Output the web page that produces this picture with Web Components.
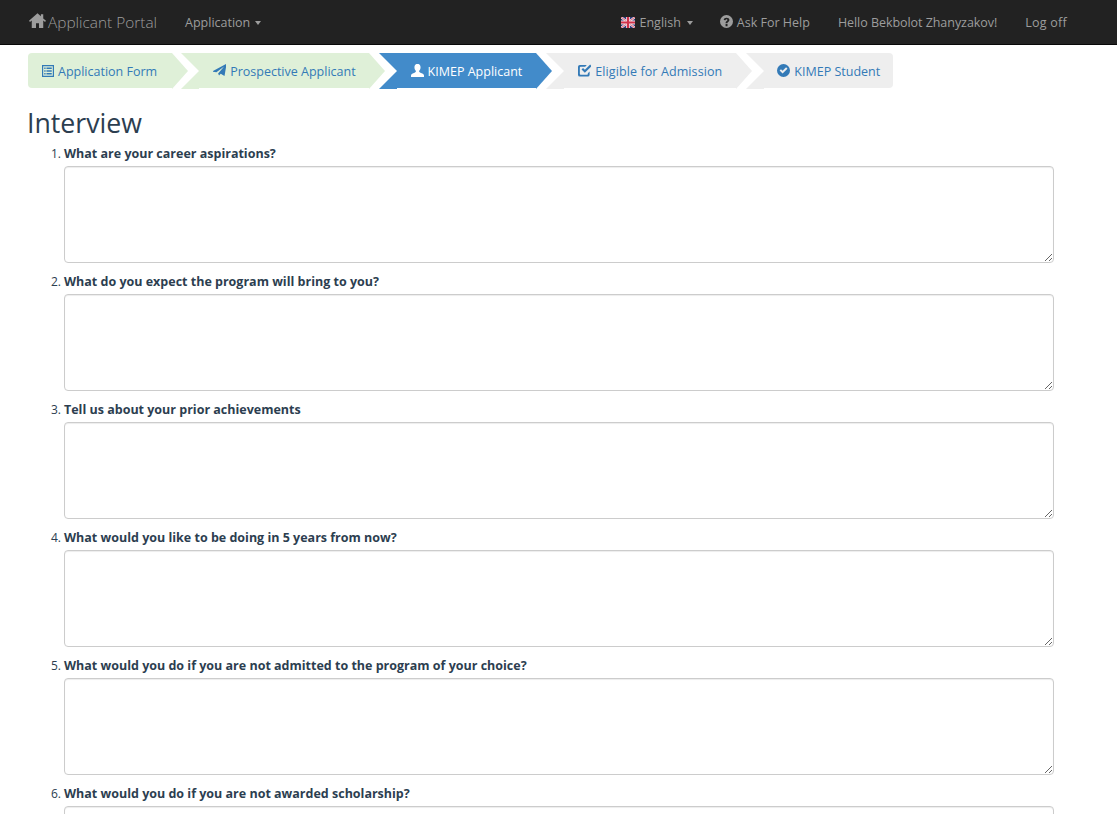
<!DOCTYPE html>
<html lang="en">
<head>
<meta charset="utf-8">
<title>Interview</title>
<style>
    html, body { margin: 0; height: 814px; overflow: hidden; background: #fff; }
    body { font: 12.5px/1.42857 "Open Sans", "Noto Sans", sans-serif; color: #2c3e50; }
</style>
</head>
<body>
<portal-navbar></portal-navbar>
<wizard-steps>
    <wizard-step icon="list" state="done" first style="padding-right:15px">Application Form</wizard-step>
    <wizard-step icon="send" state="done" style="padding-right:13px;margin-left:27px">Prospective Applicant</wizard-step>
    <wizard-step icon="user" state="active">KIMEP Applicant</wizard-step>
    <wizard-step icon="check" state="todo" style="letter-spacing:.1px">Eligible for Admission</wizard-step>
    <wizard-step icon="ok" state="todo" last style="padding-left:13px">KIMEP Student</wizard-step>
</wizard-steps>
<interview-form>
    <interview-question>What are your career aspirations?</interview-question>
    <interview-question>What do you expect the program will bring to you?</interview-question>
    <interview-question>Tell us about your prior achievements</interview-question>
    <interview-question>What would you like to be doing in 5 years from now?</interview-question>
    <interview-question>What would you do if you are not admitted to the program of your choice?</interview-question>
    <interview-question>What would you do if you are not awarded scholarship?</interview-question>
</interview-form>

<script>
const ICONS = {
    home: '<path d="M8 1.200 0 8.300l.9 1L2.600 7.900V15h4V10.600h2.800V15h4V7.900l1.700 1.400.9-1-2.600-2.300V2h-2.200v2.100z"/>',
    list: '<path fill-rule="evenodd" d="M1 1h14v14H1zM2.400 2.400v11.200h11.200V2.400zM3.600 4h1.600v1.600H3.600zm2.600 0h6.200v1.600H6.200zM3.600 7.200h1.600v1.600H3.600zm2.600 0h6.200v1.600H6.200zm-2.600 3.200h1.600V12H3.600zm2.600 0h6.200V12H6.200z"/>',
    send: '<path d="M15.600.8 13.400 14 9.300 11.600l-1.800 1.900-1-2.400L13 3.600 4.700 9.900 0 9.200z"/>',
    user: '<path d="M8 .8c2 0 3.300 1.600 3.300 3.800 0 1.700-.8 3.200-1.600 4 0 .9.4 1.300 1.400 1.700 1.800.7 3.900 1.200 3.900 3v1.700H1v-1.700c0-1.800 2.100-2.300 3.900-3 1-.4 1.400-.8 1.400-1.700-.8-.8-1.600-2.300-1.600-4C4.700 2.400 6 .8 8 .8z"/>',
    check: '<path d="M13.500 9v3.500a2 2 0 0 1-2 2h-8.500a2 2 0 0 1-2-2V4a2 2 0 0 1 2-2h7.500L8.700 3.900H3.800a.8.8 0 0 0-.8.8v7.200c0 .4.4.8.8.8h7a.8.8 0 0 0 .8-.8v-1zM4.800 6.900l1.600-1.600 2 2 5.700-5.700L15.700 3.200 8.400 10.500z"/>',
    ok: '<path fill-rule="evenodd" d="M8 1a7 7 0 1 1 0 14A7 7 0 0 1 8 1zM3.800 8.100 7 11.300l5.300-5.300-1.500-1.500L7 8.300 5.300 6.600z"/>',
    help: '<path fill-rule="evenodd" d="M8 1a7 7 0 1 1 0 14A7 7 0 0 1 8 1zM7 10.700V13h2.100v-2.300zM5 6.300l1.900.3c.1-.7.500-1.100 1.100-1.100.6 0 1 .3 1 .8 0 .4-.3.700-.8 1.100-.9.700-1.200 1.200-1.200 2.500h2c0-.7.200-1 .8-1.400.9-.7 1.300-1.300 1.300-2.300C11.100 4.900 9.800 4 8 4 6.300 4 5.200 4.900 5 6.300z"/>'
};

function icon(name, size, box = '1 1 14 14') {
    return `<svg width="${size}" height="${size}" viewBox="${box}" fill="currentColor" aria-hidden="true">${ICONS[name]}</svg>`;
}

class PortalNavbar extends HTMLElement {
    constructor() {
        super();
        this.attachShadow({ mode: 'open' });
        this.shadowRoot.innerHTML = `
        <style>
            :host { display: flex; align-items: center; height: 43px; padding-top: 1px; background: #222; border-bottom: 1px solid #080808; color: #9d9d9d; }
            a { color: inherit; text-decoration: none; display: flex; align-items: center; white-space: nowrap; }
            .brand { font-size: 15.400px; font-weight: 300; margin-left: 29px; gap: 2px; }
            .brand svg { margin-top: -4px; }
            .app { margin-left: 28px; }
            .right { margin-left: auto; margin-right: 50px; display: flex; align-items: center; }
            .caret { width: 0; height: 0; margin-left: 5px; border-top: 4px solid; border-left: 3.500px solid transparent; border-right: 3.500px solid transparent; }
            .lang { gap: 4px; }
            .lang .caret { margin-left: 2px; }
            .help { margin-left: 27px; gap: 4px; }
            .help svg { margin-top: -3px; }
            .hello { margin-left: 28px; letter-spacing: -.05px; }
            .logoff { margin-left: 28px; letter-spacing: .25px; }
        </style>
        <a class="brand" href="#">${icon('home', 17, '0 0 16 16')}Applicant Portal</a>
        <a class="app" href="#">Application<span class="caret"></span></a>
        <div class="right">
            <a class="lang" href="#">
                <svg width="14" height="11" viewBox="0 0 13 10" preserveAspectRatio="none" aria-hidden="true">
                    <rect width="13" height="10" fill="#2b3a7e"/>
                    <path d="M0 0 13 10M13 0 0 10" stroke="#f3dfe3" stroke-width="2"/>
                    <path d="M0 0 13 10M13 0 0 10" stroke="#d0324b" stroke-width=".7"/>
                    <path d="M6.500 0v10M0 5h13" stroke="#f3dfe3" stroke-width="3.500"/>
                    <path d="M6.500 0v10M0 5h13" stroke="#d0324b" stroke-width="2"/>
                </svg>
                English<span class="caret"></span>
            </a>
            <a class="help" href="#">${icon('help', 13)}Ask For Help</a>
            <a class="hello" href="#">Hello Bekbolot Zhanyzakov!</a>
            <a class="logoff" href="#">Log off</a>
        </div>`;
    }
}
customElements.define('portal-navbar', PortalNavbar);

class WizardSteps extends HTMLElement {
    constructor() {
        super();
        this.attachShadow({ mode: 'open' });
        this.shadowRoot.innerHTML = `
        <style>
            :host { display: flex; margin: 8px 0 0 28px; }
        </style>
        <slot></slot>`;
    }
}
customElements.define('wizard-steps', WizardSteps);

class WizardStep extends HTMLElement {
    constructor() {
        super();
        this.attachShadow({ mode: 'open' });
    }

    connectedCallback() {
        const name = this.getAttribute('icon');
        this.shadowRoot.innerHTML = `
        <style>
            :host { --bg: #eeeeee; --fg: #337ab7; display: flex; align-items: center; gap: 4px; position: relative; box-sizing: border-box; height: 35px; margin-left: 28px; padding: 2px 14px 0; background: var(--bg); color: var(--fg); white-space: nowrap; }
            :host([state="done"]) { --bg: #dff0d8; }
            :host([state="active"]) { --bg: #428bca; --fg: #fff; }
            :host([first]) { margin-left: 0; border-radius: 4px 0 0 4px; }
            :host([first]) svg { width: 12px; height: 12px; }
            :host([last]) { border-radius: 0 4px 4px 0; padding-right: 13px; }
            :host::before, :host::after { content: ""; position: absolute; top: 0; width: 0; height: 0; border-top: 18px solid transparent; border-bottom: 18px solid transparent; }
            :host::before { left: -18px; border-top-color: var(--bg); border-bottom-color: var(--bg); border-left: 18px solid transparent; }
            :host::after { right: -16px; border-left: 16px solid var(--bg); z-index: 1; }
            :host([first])::before, :host([last])::after { display: none; }
            svg { flex: none; margin-top: -2px; }
        </style>
        ${icon(name, 13)}<slot></slot>`;
    }
}
customElements.define('wizard-step', WizardStep);

class InterviewForm extends HTMLElement {
    constructor() {
        super();
        this.attachShadow({ mode: 'open' });
        this.shadowRoot.innerHTML = `
        <style>
            :host { display: block; margin: 0 63px 0 27px; counter-reset: q; }
            h2 { margin: 17px 0 0; font-size: 26.700px; font-weight: 500; line-height: 35px; }
            .list { display: flex; flex-direction: column; padding-left: 37px; margin-top: 4px; }
        </style>
        <h2>Interview</h2>
        <div class="list"><slot></slot></div>`;
    }
}
customElements.define('interview-form', InterviewForm);

class InterviewQuestion extends HTMLElement {
    constructor() {
        super();
        this.attachShadow({ mode: 'open' });
        this.shadowRoot.innerHTML = `
        <style>
            :host { display: block; position: relative; height: 128px; counter-increment: q; }
            :host::before { content: counter(q) "."; position: absolute; right: 100%; margin-right: 3px; font-size: 12px; line-height: 19px; }
            label { display: block; font-weight: 700; line-height: 19px; margin-bottom: 3px; }
            textarea { display: block; box-sizing: border-box; width: 100%; height: 97px; margin: 0; padding: 6px 12px; font: inherit; color: #555; background: #fff; border: 1px solid #ccc; border-radius: 4px; box-shadow: inset 0 1px 1px rgba(0,0,0,.075); outline: none; }
        </style>
        <label><slot></slot></label>
        <textarea></textarea>`;
    }
}
customElements.define('interview-question', InterviewQuestion);
</script>
</body>
</html>
